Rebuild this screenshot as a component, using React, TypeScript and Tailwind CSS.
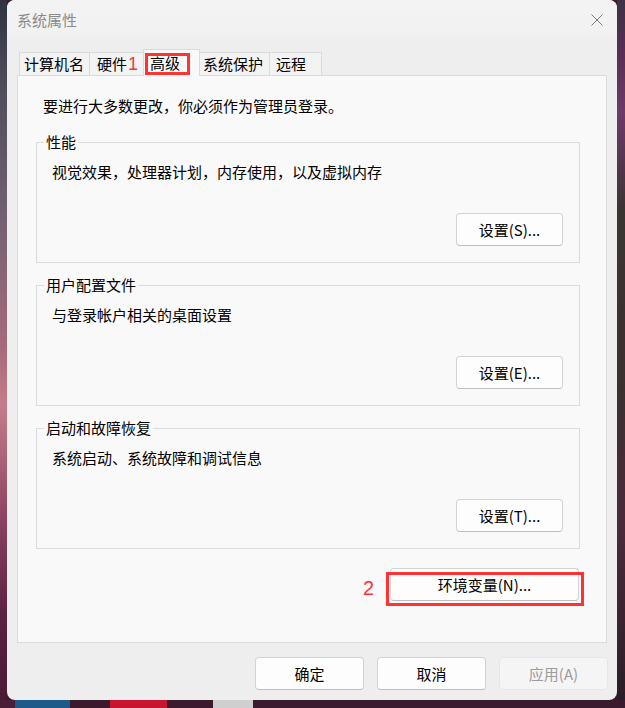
import React from "react";

function Btn({ label, className = "" }: { label: string; className?: string }) {
  return (
    <div
      className={
        "flex items-center justify-center h-[33px] rounded-[4px] border border-[#d3d3d3] border-b-[#bfbfbf] bg-[#fdfdfd] text-[15px] leading-[20px] text-[#000] " +
        className
      }
    >
      {label}
    </div>
  );
}

function Group({ title, desc, button }: { title: string; desc: string; button: string }) {
  return (
    <div className="relative h-[121px] border border-[#dcdcdc] flex flex-col pt-[19px] pl-[15px] pr-[16px] pb-[16px]">
      <span className="absolute left-[7px] top-[-11px] px-[2px] bg-[#f9f9f9] text-[15px] leading-[20px] text-[#000]">
        {title}
      </span>
      <div className="text-[15px] leading-[20px] text-[#000]">{desc}</div>
      <div className="mt-auto flex justify-end">
        <Btn label={button} className="w-[107px]" />
      </div>
    </div>
  );
}

export default function App() {
  return (
    <div className="w-[625px] h-[708px] overflow-hidden flex flex-col bg-[#3a1a2c] font-['Noto_Sans_CJK_SC',sans-serif]">
      <div className="flex h-[700px]">
        <div className="w-[7px] h-full bg-[linear-gradient(180deg,#2f3240_0%,#4f4c5a_12%,#6f6070_30%,#a86a7c_50%,#c47d8b_58%,#8c4462_74%,#5a2240_88%,#4a1a34_100%)]" />
        <div className="w-[610px] h-[700px] rounded-[8px] bg-[#eeeeee] flex flex-col overflow-hidden">
          {/* title bar */}
          <div className="h-[40px] shrink-0 flex items-center justify-between pl-[10px] pr-[14px] bg-[linear-gradient(180deg,#f3f3f3_0%,#f2f2f2_70%,#efefef_100%)]">
            <span className="text-[15px] leading-[20px] text-[#8a8a8a]">系统属性</span>
            <svg width="12" height="12" viewBox="0 0 12 12">
              <path d="M0.5 0.5 L11.5 11.5 M11.5 0.5 L0.5 11.5" stroke="#7a7a7a" strokeWidth="1" fill="none" />
            </svg>
          </div>
          {/* tabs */}
          <div className="relative z-10 mt-[9px] h-[27px] mb-[-1px] flex items-end pl-[12px] text-[15px] leading-[20px] text-[#000]">
            <div className="w-[71px] h-[24px] border border-[#dadada] bg-[#f3f3f3] flex items-center pl-[4px]">计算机名</div>
            <div className="-ml-px w-[55px] h-[24px] border border-[#dadada] bg-[#f3f3f3] flex items-center pl-[7px]">
              硬件<span className="ml-[1px] font-['Liberation_Sans',sans-serif] text-[18px] leading-none text-[#ff3333]">1</span>
            </div>
            <div className="relative -ml-px w-[57px] h-[27px] border border-b-0 border-[#dadada] bg-[#f9f9f9] flex items-center pl-[6px] pb-[1px]">
              高级
              <span className="absolute left-[1px] top-[3px] w-[45px] h-[22px] border-[3px] border-[#ff3333]" />
            </div>
            <div className="-ml-px w-[71px] h-[24px] border border-[#dadada] bg-[#f3f3f3] flex items-center pl-[3px]">系统保护</div>
            <div className="-ml-px w-[53px] h-[24px] border border-[#dadada] bg-[#f3f3f3] flex items-center pl-[6px]">远程</div>
          </div>
          {/* panel */}
          <div className="mx-[10px] h-[568px] shrink-0 border border-[#dadada] bg-[#f9f9f9] flex flex-col pl-[18px] pr-[26px]">
            <div className="mt-[20px] ml-[7px] text-[15px] leading-[20px] text-[#000]">
              要进行大多数更改，你必须作为管理员登录。
            </div>
            <div className="mt-[26px] flex flex-col gap-[22px]">
              <Group title="性能" desc="视觉效果，处理器计划，内存使用，以及虚拟内存" button="设置(S)..." />
              <Group title="用户配置文件" desc="与登录帐户相关的桌面设置" button="设置(E)..." />
              <Group title="启动和故障恢复" desc="系统启动、系统故障和调试信息" button="设置(T)..." />
            </div>
            <div className="mt-[19px] flex justify-end items-start pr-[1px]">
              <span className="mt-[9px] mr-[16px] font-['Liberation_Sans',sans-serif] text-[20px] leading-[22px] text-[#ff3333]">2</span>
              <div className="relative">
                <Btn label="环境变量(N)..." className="w-[189px]" />
                <span className="absolute left-[-4px] top-[4px] w-[198px] h-[34px] border-[3px] border-[#ff3333]" />
              </div>
            </div>
          </div>
          {/* bottom buttons */}
          <div className="mt-[14px] flex justify-end gap-[13px] pr-[9px]">
            <Btn label="确定" className="w-[109px]" />
            <Btn label="取消" className="w-[109px]" />
            <div className="flex items-center justify-center w-[109px] h-[33px] rounded-[4px] border border-[#e6e6e6] bg-[#f5f5f5] text-[15px] leading-[20px] text-[#9c9c9c]">
              应用(A)
            </div>
          </div>
        </div>
        <div className="w-[8px] h-full bg-[linear-gradient(180deg,#3a3444_0%,#5a2e52_8%,#6e3a66_16%,#3a3532_30%,#3a3030_55%,#4a2a3a_75%,#2a1e26_100%)]" />
      </div>
      <div className="h-[8px] flex">
        <div className="w-[15px] bg-[#4a1e36]" />
        <div className="w-[55px] bg-[#1d5a8a]" />
        <div className="w-[40px] bg-[#3a1a2c]" />
        <div className="w-[57px] bg-[#c8142f]" />
        <div className="w-[46px] bg-[#3a1a2c]" />
        <div className="w-[40px] bg-[#cfcfcf]" />
        <div className="flex-1 bg-[#3a1a2c]" />
      </div>
    </div>
  );
}
